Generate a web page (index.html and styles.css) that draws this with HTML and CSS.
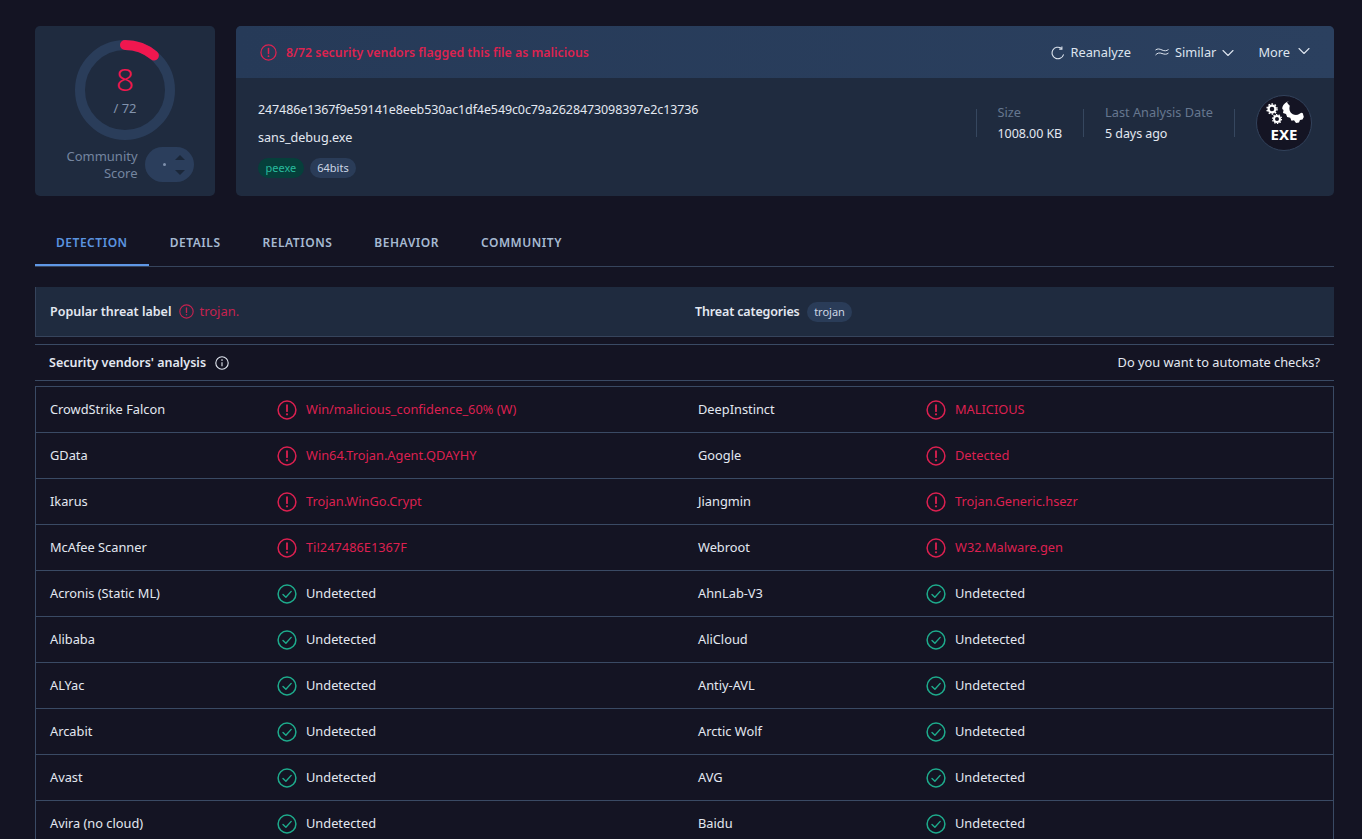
FILE: index.html
```html
<!DOCTYPE html>
<html lang="en">
<head>
    <meta charset="UTF-8">
    <meta name="viewport" content="width=device-width, initial-scale=1.0">
    <title>VirusTotal - File</title>
    <link rel="stylesheet" href="styles.css">
</head>
<body>
    <svg class="icon-defs" width="0" height="0">
        <symbol id="alert" viewBox="0 0 20 20">
            <circle cx="10" cy="10" r="8.9" fill="none" stroke="currentColor" stroke-width="1.5"/>
            <path d="M10 5.2v6" fill="none" stroke="currentColor" stroke-width="1.8" stroke-linecap="round"/>
            <circle cx="10" cy="14.3" r="1.1" fill="currentColor"/>
        </symbol>
        <symbol id="check" viewBox="0 0 20 20">
            <circle cx="10" cy="10" r="8.9" fill="none" stroke="currentColor" stroke-width="1.5"/>
            <path d="M6 10.4l2.900 2.900 5.300-5.900" fill="none" stroke="currentColor" stroke-width="1.4" stroke-linecap="round" stroke-linejoin="round"/>
        </symbol>
        <symbol id="chevron" viewBox="0 0 12 8">
            <path d="M1 1.500l5 5 5-5" fill="none" stroke="currentColor" stroke-width="1.100" stroke-linecap="round" stroke-linejoin="round"/>
        </symbol>
    </svg>

    <section class="summary">
        <div class="score-card">
            <div class="gauge">
                <svg class="gauge-ring" width="100" height="100" viewBox="0 0 100 100">
                    <circle cx="50" cy="50" r="45" fill="none" stroke="#2a3d5a" stroke-width="10"/>
                    <path d="M50 5A45 45 0 0 1 78.900 15.500" fill="none" stroke="#f0174f" stroke-width="10" stroke-linecap="round"/>
                </svg>
                <div class="gauge-value">8</div>
                <div class="gauge-total">/ 72</div>
            </div>
            <div class="community">
                <div class="community-label">Community<br>Score</div>
                <div class="community-pill">
                    <span class="community-dot"></span>
                    <svg class="community-arrows" width="12" height="26" viewBox="0 0 12 26">
                        <path d="M1 8L6 3l5 5z" fill="#1b2739"/>
                        <path d="M1 18L6 23l5-5z" fill="#1b2739"/>
                    </svg>
                </div>
            </div>
        </div>

        <div class="file-card">
            <div class="file-header">
                <div class="flag-text">
                    <svg class="icon-17"><use href="#alert"/></svg>
                    <span>8/72 security vendors flagged this file as malicious</span>
                </div>
                <div class="actions">
                    <span class="action reanalyze">
                        <svg width="14" height="14" viewBox="0 0 14 14"><path d="M12.400 8.800A5.800 5.800 0 1 1 10.300 2.300" fill="none" stroke="currentColor" stroke-width="1.100" stroke-linecap="round"/><path d="M10.900 .4v2.700H8.200" fill="none" stroke="currentColor" stroke-width="1.100"/></svg>
                        Reanalyze
                    </span>
                    <span class="action similar">
                        <svg width="14" height="9" viewBox="0 0 14 9"><path d="M.5 2C2.500 .5 4.500 .8 7 2s4.500 1 6.500-.5M.5 7C2.500 4.800 4.500 4.600 7 5.500s4.500 1.200 6.500-.5" fill="none" stroke="currentColor" stroke-width="1"/></svg>
                        Similar
                        <svg class="chev"><use href="#chevron"/></svg>
                    </span>
                    <span class="action more">
                        More
                        <svg class="chev chev-more"><use href="#chevron"/></svg>
                    </span>
                </div>
            </div>
            <div class="file-body">
                <div class="file-main">
                    <div class="file-hash">247486e1367f9e59141e8eeb530ac1df4e549c0c79a2628473098397e2c13736</div>
                    <div class="file-name">sans_debug.exe</div>
                    <div class="tags">
                        <span class="tag tag-green">peexe</span>
                        <span class="tag">64bits</span>
                    </div>
                </div>
                <div class="file-meta">
                    <div class="meta-item">
                        <div class="meta-label">Size</div>
                        <div class="meta-value">1008.00 KB</div>
                    </div>
                    <div class="meta-item">
                        <div class="meta-label">Last Analysis Date</div>
                        <div class="meta-value">5 days ago</div>
                    </div>
                    <div class="meta-item meta-icon">
                        <div class="exe-badge">
                            <svg width="50" height="30" viewBox="0 0 50 30">
                                <circle cx="13" cy="10" r="3.400" fill="none" stroke="#fff" stroke-width="2.200"/>
                                <circle cx="13" cy="10" r="5" fill="none" stroke="#fff" stroke-width="1.400" stroke-dasharray="1.600 1.600"/>
                                <circle cx="18" cy="20" r="3" fill="none" stroke="#fff" stroke-width="2"/>
                                <circle cx="18" cy="20" r="4.500" fill="none" stroke="#fff" stroke-width="1.200" stroke-dasharray="1.400 1.400"/>
                                <path d="M30 2C25.500 3.500 23 7 23.300 10l1.200 1-.5 3 3 1 1.200 3 3 .8 1.300 3 2.500-.5 2 2.700 3-.5 1-2.500 2.500-.5 1.300-2.500-1-3.700-1.500-.5-3.500 2c-3 .6-6-.5-7.300-2.500-1.500-2.500-1.200-4.500-.7-6.500-1-1-2-2-2.800-3.300z" fill="#fff"/>
                            </svg>
                            <span class="exe-text">EXE</span>
                        </div>
                    </div>
                </div>
            </div>
        </div>
    </section>

    <nav class="tabs">
        <span class="tab tab-active">DETECTION</span>
        <span class="tab">DETAILS</span>
        <span class="tab">RELATIONS</span>
        <span class="tab">BEHAVIOR</span>
        <span class="tab">COMMUNITY</span>
    </nav>

    <div class="threat-bar">
        <div class="threat-cell">
            <b>Popular threat label</b>
            <svg class="icon-15 threat-red"><use href="#alert"/></svg>
            <span class="threat-red threat-name">trojan.</span>
        </div>
        <div class="threat-cell threat-cell-right">
            <b>Threat categories</b>
            <span class="tag tag-threat">trojan</span>
        </div>
    </div>

    <div class="vendors-head">
        <div class="vendors-title">
            <b>Security vendors' analysis</b>
            <svg width="14" height="14" viewBox="0 0 14 14"><circle cx="7" cy="7" r="6.200" fill="none" stroke="currentColor" stroke-width="1.100"/><path d="M7 6.200v4" stroke="currentColor" stroke-width="1.100"/><circle cx="7" cy="4.100" r=".8" fill="currentColor"/></svg>
        </div>
        <div>Do you want to automate checks?</div>
    </div>

    <div class="vendors">
        <div class="row">
            <div class="vendor">CrowdStrike Falcon</div>
            <div class="verdict red"><svg class="icon-20"><use href="#alert"/></svg>Win/malicious_confidence_60% (W)</div>
            <div class="vendor">DeepInstinct</div>
            <div class="verdict red"><svg class="icon-20"><use href="#alert"/></svg>MALICIOUS</div>
        </div>
        <div class="row">
            <div class="vendor">GData</div>
            <div class="verdict red"><svg class="icon-20"><use href="#alert"/></svg>Win64.Trojan.Agent.QDAYHY</div>
            <div class="vendor">Google</div>
            <div class="verdict red"><svg class="icon-20"><use href="#alert"/></svg>Detected</div>
        </div>
        <div class="row">
            <div class="vendor">Ikarus</div>
            <div class="verdict red"><svg class="icon-20"><use href="#alert"/></svg>Trojan.WinGo.Crypt</div>
            <div class="vendor">Jiangmin</div>
            <div class="verdict red"><svg class="icon-20"><use href="#alert"/></svg>Trojan.Generic.hsezr</div>
        </div>
        <div class="row">
            <div class="vendor">McAfee Scanner</div>
            <div class="verdict red"><svg class="icon-20"><use href="#alert"/></svg>Ti!247486E1367F</div>
            <div class="vendor">Webroot</div>
            <div class="verdict red"><svg class="icon-20"><use href="#alert"/></svg>W32.Malware.gen</div>
        </div>
        <div class="row">
            <div class="vendor">Acronis (Static ML)</div>
            <div class="verdict"><svg class="icon-20 green"><use href="#check"/></svg>Undetected</div>
            <div class="vendor">AhnLab-V3</div>
            <div class="verdict"><svg class="icon-20 green"><use href="#check"/></svg>Undetected</div>
        </div>
        <div class="row">
            <div class="vendor">Alibaba</div>
            <div class="verdict"><svg class="icon-20 green"><use href="#check"/></svg>Undetected</div>
            <div class="vendor">AliCloud</div>
            <div class="verdict"><svg class="icon-20 green"><use href="#check"/></svg>Undetected</div>
        </div>
        <div class="row">
            <div class="vendor">ALYac</div>
            <div class="verdict"><svg class="icon-20 green"><use href="#check"/></svg>Undetected</div>
            <div class="vendor">Antiy-AVL</div>
            <div class="verdict"><svg class="icon-20 green"><use href="#check"/></svg>Undetected</div>
        </div>
        <div class="row">
            <div class="vendor">Arcabit</div>
            <div class="verdict"><svg class="icon-20 green"><use href="#check"/></svg>Undetected</div>
            <div class="vendor">Arctic Wolf</div>
            <div class="verdict"><svg class="icon-20 green"><use href="#check"/></svg>Undetected</div>
        </div>
        <div class="row">
            <div class="vendor">Avast</div>
            <div class="verdict"><svg class="icon-20 green"><use href="#check"/></svg>Undetected</div>
            <div class="vendor">AVG</div>
            <div class="verdict"><svg class="icon-20 green"><use href="#check"/></svg>Undetected</div>
        </div>
        <div class="row">
            <div class="vendor">Avira (no cloud)</div>
            <div class="verdict"><svg class="icon-20 green"><use href="#check"/></svg>Undetected</div>
            <div class="vendor">Baidu</div>
            <div class="verdict"><svg class="icon-20 green"><use href="#check"/></svg>Undetected</div>
        </div>
    </div>
</body>
</html>
```

FILE: styles.css
```css
html, body {
    height: 839px;
    overflow: hidden;
}

body {
    margin: 0;
    padding: 26px 28px 0 35px;
    box-sizing: border-box;
    background-color: #141423;
    color: #e3e8f1;
    font-family: "Noto Sans", sans-serif;
    font-size: 12.8px;
    line-height: 17px;
}

b {
    font-weight: 600;
    font-size: 12.5px;
}

.icon-defs {
    position: absolute;
}

.red {
    color: #dc2050;
}

.green {
    color: #1eab8c;
}

.icon-15 {
    width: 15px;
    height: 15px;
}

.icon-17 {
    width: 17px;
    height: 17px;
}

.icon-20 {
    width: 20px;
    height: 20px;
    margin-right: 9px;
    flex: none;
}

/* Top cards */
.summary {
    display: flex;
    gap: 21px;
    height: 170px;
}

.score-card {
    width: 180px;
    flex: none;
    box-sizing: border-box;
    padding-top: 14px;
    background-color: #1f2b3f;
    border-radius: 5px;
    display: flex;
    flex-direction: column;
    align-items: center;
}

.gauge {
    position: relative;
    width: 100px;
    height: 100px;
    text-align: center;
}

.gauge-ring {
    display: block;
}

.gauge-value {
    position: absolute;
    top: 21px;
    left: 0;
    right: 0;
    color: #f0174f;
    font-size: 32px;
    font-weight: 300;
    line-height: 36px;
}

.gauge-total {
    position: absolute;
    top: 60px;
    left: 0;
    right: 0;
    color: #8293ad;
    font-size: 13px;
}

.community {
    display: flex;
    align-items: center;
    gap: 7px;
    margin-top: 7px;
    margin-left: 10px;
}

.community-label {
    color: #74859f;
    font-size: 13px;
    text-align: right;
}

.community-pill {
    display: flex;
    align-items: center;
    justify-content: space-between;
    box-sizing: border-box;
    width: 49px;
    height: 35px;
    padding: 0 8px 0 18px;
    border-radius: 18px;
    background-color: #2b3e5c;
}

.community-dot {
    width: 3px;
    height: 3px;
    border-radius: 50%;
    background-color: #7e90ac;
}

.file-card {
    flex: 1;
    background-color: #1f2b3f;
    border-radius: 5px;
    overflow: hidden;
}

.file-header {
    height: 52px;
    box-sizing: border-box;
    padding: 1px 24px 0;
    display: flex;
    align-items: center;
    justify-content: space-between;
    background: linear-gradient(90deg, #263a58, #2b405f);
}

.flag-text {
    display: flex;
    align-items: center;
    gap: 9px;
    color: #dc2350;
    font-size: 12.35px;
    font-weight: 600;
}

.actions {
    display: flex;
    align-items: center;
    gap: 24px;
    color: #dde4ee;
}

.action {
    display: flex;
    align-items: center;
    gap: 6px;
}

.chev {
    width: 12px;
    height: 8px;
}

.chev-more {
    margin-left: 2px;
    margin-top: -3px;
}

.file-body {
    display: flex;
    justify-content: space-between;
    padding: 0 22px;
}

.file-main {
    padding-top: 23px;
}

.file-hash {
    margin-bottom: 11px;
    font-size: 12.5px;
    letter-spacing: -.11px;
}

.file-name {
    font-size: 12.6px;
}

.tags {
    display: flex;
    gap: 6px;
    margin-top: 12px;
}

.tag {
    padding: 0 7.5px;
    height: 20px;
    line-height: 20px;
    border-radius: 10px;
    font-size: 11px;
    background-color: #2a3c58;
    color: #ccd6e5;
}

.tag-green {
    background-color: #063f3b;
    color: #28bb9d;
}

.tag-threat {
    margin-left: 7px;
}

.file-meta {
    display: flex;
    align-items: center;
    height: 90px;
}

.meta-item {
    display: flex;
    flex-direction: column;
    justify-content: center;
    height: 28px;
    padding: 0 21px;
    border-left: 1px solid #36475f;
}

.meta-label {
    color: #66778f;
    font-size: 12.75px;
    margin-bottom: 4px;
}

.meta-value {
    font-size: 12.5px;
    letter-spacing: -.08px;
}

.meta-icon {
    padding-right: 0;
    padding-left: 21px;
    align-items: center;
}

.exe-badge {
    width: 56px;
    height: 56px;
    box-sizing: border-box;
    border-radius: 50%;
    border: 1px solid #33435c;
    background-color: #141423;
    display: flex;
    flex-direction: column;
    align-items: center;
    padding-top: 3px;
    flex: none;
}

.exe-badge svg {
    flex: none;
}

.exe-text {
    color: #fff;
    font-size: 15px;
    font-weight: 700;
    line-height: 14px;
    margin-top: -2px;
}

/* Tabs */
.tabs {
    display: flex;
    margin-top: 26px;
    height: 45px;
    box-sizing: border-box;
    border-bottom: 1px solid #36445c;
}

.tab {
    padding: 12px 21px 0;
    height: 44px;
    box-sizing: border-box;
    font-size: 12px;
    font-weight: 600;
    letter-spacing: .53px;
    color: #a6bad2;
}

.tab-active {
    color: #5b94e0;
    border-bottom: 2px solid #5f97e6;
}

/* Threat bar */
.threat-bar {
    display: flex;
    align-items: center;
    height: 50px;
    box-sizing: border-box;
    margin-top: 20px;
    padding-left: 14px;
    background-color: #1f2b3f;
    border: 1px solid #36445c;
    border-top: 0;
    border-right: 0;
}

.threat-cell {
    display: flex;
    align-items: center;
    width: 645px;
    flex: none;
}

.threat-cell .icon-15 {
    margin: 0 5px 0 8px;
}

.threat-red {
    color: #c5224f;
}

.threat-name {
    font-size: 13px;
}

.threat-cell-right {
    flex: 1;
    width: auto;
}

.threat-cell-right b {
    letter-spacing: -.15px;
}

.vendors-head {
    display: flex;
    align-items: center;
    justify-content: space-between;
    height: 37px;
    box-sizing: border-box;
    margin-top: 7px;
    padding: 0 14px;
    border-top: 1px solid #3a4a64;
    border-bottom: 1px solid #3a4a64;
}

.vendors-title {
    display: flex;
    align-items: center;
    gap: 9px;
}

/* Vendors table */
.vendors {
    margin-top: 5px;
    border: 1px solid #3a4a64;
    border-bottom: 0;
}

.row {
    display: grid;
    grid-template-columns: 227px 421px 228px 1fr;
    align-items: center;
    height: 46px;
    box-sizing: border-box;
    padding-left: 14px;
    border-bottom: 1px solid #3a4a64;
}

.verdict {
    display: flex;
    align-items: center;
}
```
